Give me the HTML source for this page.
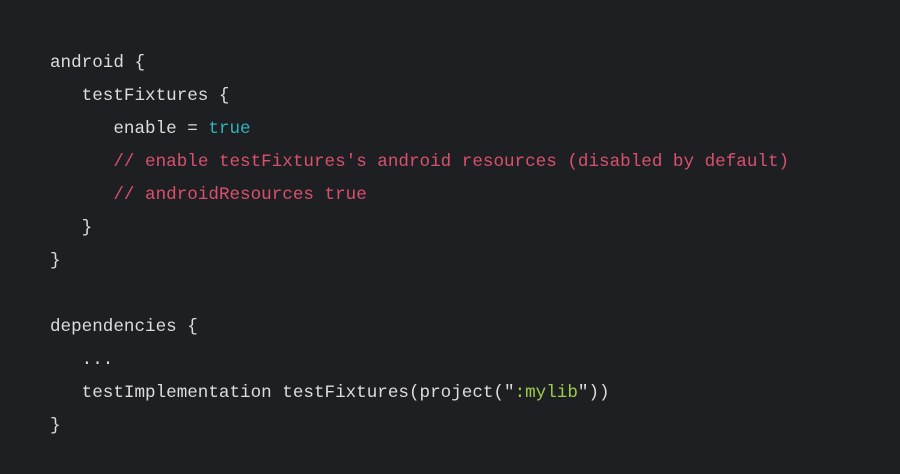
<!DOCTYPE html>
<html><head><meta charset="utf-8"><style>
html,body{margin:0;padding:0;}
body{width:900px;height:474px;background:#1e1f22;overflow:hidden;}
pre{margin:0;position:absolute;left:50px;top:47px;font-family:"Liberation Mono",monospace;font-size:17.6px;line-height:33px;color:#dcdcdc;}
.k{color:#2fb3bb}.c{color:#d9506f}.s{color:#9ccc4a}
</style></head><body>
<pre>android {
   testFixtures {
      enable = <span class="k">true</span>
      <span class="c">// enable testFixtures's android resources (disabled by default)</span>
      <span class="c">// androidResources true</span>
   }
}

dependencies {
   ...
   testImplementation testFixtures(project("<span class="s">:mylib</span>"))
}</pre>
</body></html>
